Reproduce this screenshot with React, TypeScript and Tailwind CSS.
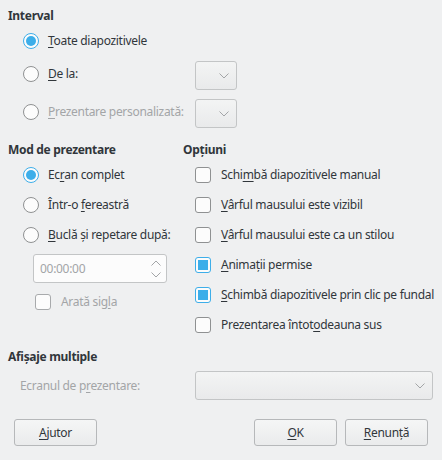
import React from 'react';

const font = { fontFamily: '"Noto Sans", "DejaVu Sans", sans-serif' };

const U: React.FC<{ children: React.ReactNode }> = ({ children }) => (
  <span className="underline underline-offset-[2px] decoration-1">{children}</span>
);

const Radio: React.FC<{ checked?: boolean }> = ({ checked }) =>
  checked ? (
    <span className="w-[16px] h-[16px] rounded-full border border-[#3daee9] bg-[#fcfcfc] flex items-center justify-center shrink-0">
      <span className="w-[10px] h-[10px] rounded-full bg-[#3daee9]" />
    </span>
  ) : (
    <span className="w-[16px] h-[16px] rounded-full border border-[#8f9192] bg-[#fcfcfc] shrink-0" />
  );

const Check: React.FC<{ checked?: boolean; disabled?: boolean }> = ({ checked, disabled }) =>
  checked ? (
    <span className="w-[16px] h-[16px] rounded-[3px] border border-[#3daee9] bg-[#fcfcfc] flex items-center justify-center shrink-0">
      <span className="w-[10px] h-[10px] bg-[#3daee9]" />
    </span>
  ) : (
    <span
      className={
        'w-[16px] h-[16px] rounded-[3px] border bg-[#fcfcfc] shrink-0 ' +
        (disabled ? 'border-[#a8aaac]' : 'border-[#8f9192]')
      }
    />
  );

const Chevron: React.FC<{ up?: boolean }> = ({ up }) => (
  <svg width="10" height="6" viewBox="0 0 10 6" fill="none" stroke="#a3a5a7" strokeWidth="1">
    {up ? <polyline points="0.5,5.5 5,1 9.5,5.5" /> : <polyline points="0.5,0.5 5,5 9.5,0.5" />}
  </svg>
);

const Combo: React.FC<{ w: string }> = ({ w }) => (
  <div
    className={
      'h-[29px] rounded-[3px] border border-[#c3c5c6] bg-gradient-to-b from-[#f3f4f4] to-[#e9eaeb] flex items-center justify-end pr-[7px] ' +
      w
    }
  >
    <Chevron />
  </div>
);

const Button: React.FC<{ w: string; children: React.ReactNode }> = ({ w, children }) => (
  <div
    className={
      'h-[27px] rounded-[3px] border border-[#b6b8ba] bg-gradient-to-b from-[#f5f6f6] to-[#eaebec] flex items-center justify-center text-[#31363b] ' +
      w
    }
  >
    {children}
  </div>
);

export default function App() {
  return (
    <div
      className="w-[442px] h-[460px] bg-[#eff0f1] text-[12px] tracking-[-0.3px] text-[#31363b] overflow-hidden whitespace-nowrap"
      style={font}
    >
      <div className="pt-[8px] px-[8px]">
        <div className="h-[16px] leading-[16px] font-bold">Interval</div>

        <div className="mt-[3px] h-[28px] flex items-center pl-[15px] gap-[9px]">
          <Radio checked />
          <span>
            <U>T</U>oate diapozitivele
          </span>
        </div>

        <div className="mt-[6px] h-[29px] flex items-center">
          <div className="w-[187px] flex items-center pl-[15px] gap-[9px] -mt-[4px]">
            <Radio />
            <span>
              <U>D</U>e la:
            </span>
          </div>
          <Combo w="w-[42px]" />
        </div>

        <div className="mt-[9px] h-[29px] flex items-center">
          <div className="w-[187px] flex items-center pl-[15px] gap-[9px] -mt-[4px]">
            <Radio />
            <span className="text-[#a3a5a7]">
              <U>P</U>rezentare personalizată:
            </span>
          </div>
          <Combo w="w-[42px]" />
        </div>

        <div className="mt-[14px] flex">
          <div className="w-[175px]">
            <div className="h-[16px] leading-[16px] font-bold">Mod de prezentare</div>
            <div className="mt-[2px] h-[30px] flex items-center pl-[15px] gap-[9px]">
              <Radio checked />
              <span>
                Ec<U>r</U>an complet
              </span>
            </div>
            <div className="h-[30px] flex items-center pl-[15px] gap-[9px]">
              <Radio />
              <span>
                Într-o <U>f</U>ereastră
              </span>
            </div>
            <div className="h-[30px] flex items-center pl-[15px] gap-[9px]">
              <Radio />
              <span>
                <U>B</U>uclă și repetare după:
              </span>
            </div>
            <div className="mt-[4px] ml-[25px] w-[134px] h-[29px] rounded-[3px] border border-[#c3c5c6] bg-[#fcfcfc] flex items-center justify-between pl-[6px] pr-[5px] text-[#a3a5a7]">
              <span>00:00:00</span>
              <div className="flex flex-col gap-[6px]">
                <Chevron up />
                <Chevron />
              </div>
            </div>
            <div className="mt-[4px] h-[30px] flex items-center pl-[27px] gap-[10px] text-[#a3a5a7]">
              <Check disabled />
              <span>
                Arată sig<U>l</U>a
              </span>
            </div>
          </div>

          <div className="flex-1">
            <div className="h-[16px] leading-[16px] font-bold">Opțiuni</div>
            <div className="mt-[2px] flex flex-col pl-[12px]">
              {[
                { c: false, t: <>Schi<U>m</U>bă diapozitivele manual</> },
                { c: false, t: <><U>V</U>ârful mausului este vizibil</> },
                { c: false, t: <><U>V</U>ârful mausului este ca un stilou</> },
                { c: true, t: <><U>A</U>nimații permise</> },
                { c: true, t: <><U>S</U>chimbă diapozitivele prin clic pe fundal</> },
                { c: false, t: <>Prezentarea întot<U>o</U>deauna sus</> },
              ].map((r, i) => (
                <div key={i} className="h-[30px] flex items-center gap-[10px]">
                  <Check checked={r.c} />
                  <span>{r.t}</span>
                </div>
              ))}
            </div>
          </div>
        </div>

        <div className="mt-[9px] h-[16px] leading-[16px] font-bold">Afișaje multiple</div>
        <div className="mt-[6px] h-[29px] flex items-center">
          <div className="w-[187px] pl-[12px] text-[#a3a5a7]">
            Ecranul de p<U>r</U>ezentare:
          </div>
          <Combo w="w-[238px]" />
        </div>

        <div className="mt-[19px] flex items-center pl-[6px]">
          <Button w="w-[83px]">
            <span>
              <U>A</U>jutor
            </span>
          </Button>
          <div className="flex-1" />
          <Button w="w-[83px]">
            <span>
              <U>O</U>K
            </span>
          </Button>
          <div className="w-[8px]" />
          <Button w="w-[83px]">
            <span>
              <U>R</U>enunță
            </span>
          </Button>
          <div className="w-[6px]" />
        </div>
      </div>
    </div>
  );
}
